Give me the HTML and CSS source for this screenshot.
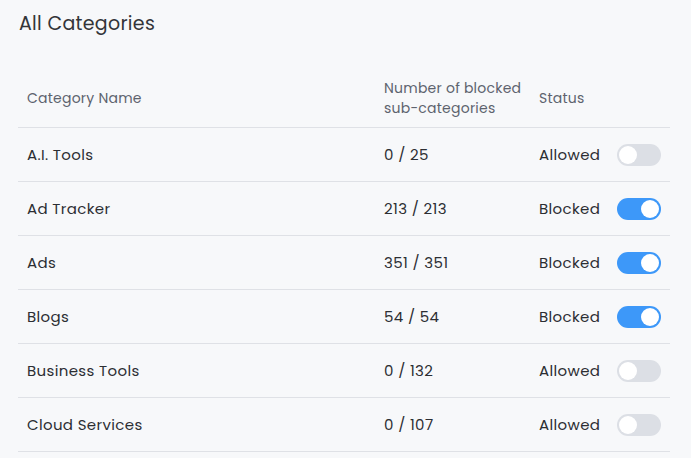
FILE: index.html
```html
<!DOCTYPE html>
<html>
<head>
<meta charset="utf-8">
<link rel="stylesheet" href="styles.css">
</head>
<body>
<div class="page">
  <h1 class="title">All Categories</h1>
  <div class="table">
    <div class="row head">
      <div class="cell name">Category Name</div>
      <div class="cell count">Number of blocked<br>sub-categories</div>
      <div class="cell status">Status</div>
    </div>
    <div class="row">
      <div class="cell name">A.I. Tools</div>
      <div class="cell count">0 / 25</div>
      <div class="cell status"><span>Allowed</span><span class="toggle"></span></div>
    </div>
    <div class="row">
      <div class="cell name">Ad Tracker</div>
      <div class="cell count">213 / 213</div>
      <div class="cell status"><span>Blocked</span><span class="toggle on"></span></div>
    </div>
    <div class="row">
      <div class="cell name">Ads</div>
      <div class="cell count">351 / 351</div>
      <div class="cell status"><span>Blocked</span><span class="toggle on"></span></div>
    </div>
    <div class="row">
      <div class="cell name">Blogs</div>
      <div class="cell count">54 / 54</div>
      <div class="cell status"><span>Blocked</span><span class="toggle on"></span></div>
    </div>
    <div class="row">
      <div class="cell name">Business Tools</div>
      <div class="cell count">0 / 132</div>
      <div class="cell status"><span>Allowed</span><span class="toggle"></span></div>
    </div>
    <div class="row">
      <div class="cell name">Cloud Services</div>
      <div class="cell count">0 / 107</div>
      <div class="cell status"><span>Allowed</span><span class="toggle"></span></div>
    </div>
  </div>
</div>
</body>
</html>
```

FILE: styles.css
```css
html, body {
  margin: 0;
  padding: 0;
  background: #f7f8fa;
}
body {
  font-family: Poppins, Inter, "Open Sans", sans-serif;
  color: #2c2e33;
  overflow: hidden;
}
.page {
  padding: 12px 21px 0 18px;
}
.title {
  margin: 0 0 0 1px;
  font-size: 19px;
  font-weight: 400;
  line-height: 24px;
  color: #333539;
  letter-spacing: 0.3px;
}
.table {
  margin-top: 33px;
}
.row {
  display: grid;
  grid-template-columns: 366px 155px 1fr;
  height: 53px;
  border-bottom: 1px solid #dfe1e6;
  align-items: center;
  font-size: 15px;
  letter-spacing: 0.35px;
}
.row.head {
  height: 58px;
  font-size: 14px;
  color: #5d636e;
  line-height: 20px;
  letter-spacing: 0.23px;
}
.name {
  padding-left: 9px;
}
.status {
  display: flex;
  align-items: center;
  padding-right: 9px;
}
.toggle {
  margin-left: auto;
  width: 44px;
  height: 22px;
  border-radius: 11px;
  background: #dcdfe5;
  display: flex;
  align-items: center;
  padding: 0 2px;
  box-sizing: border-box;
}
.toggle::before {
  content: "";
  width: 18px;
  height: 18px;
  border-radius: 50%;
  background: #ffffff;
}
.toggle.on {
  background: #3d98f9;
  justify-content: flex-end;
}
```
